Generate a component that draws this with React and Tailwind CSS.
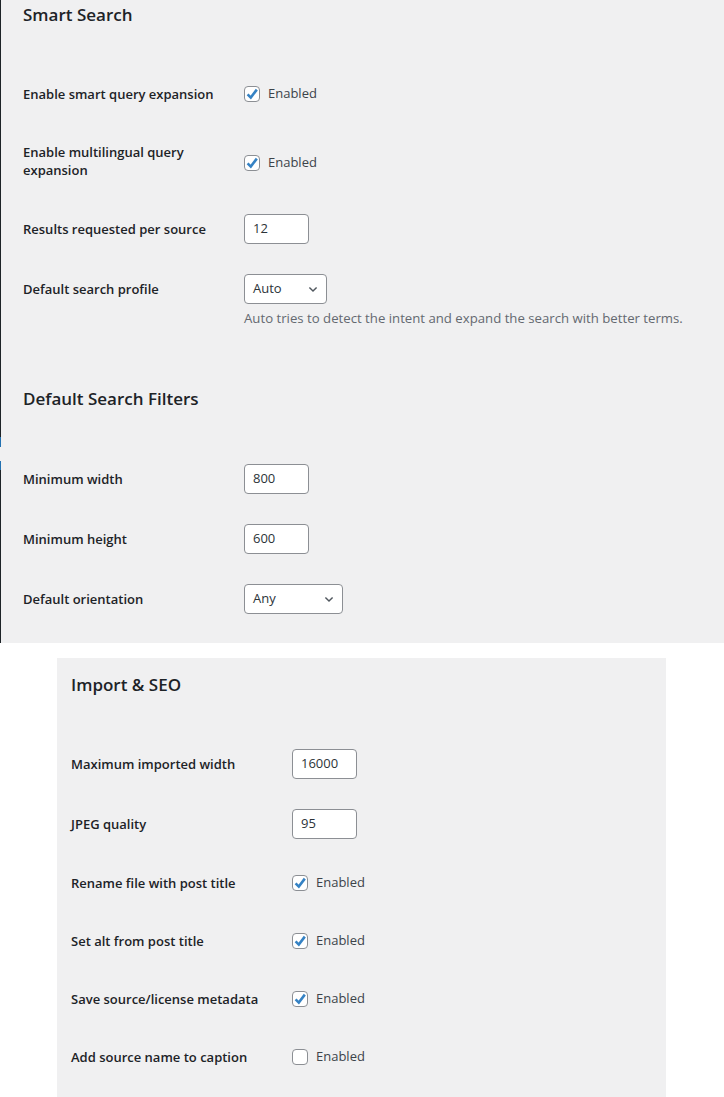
import React from "react";

const font = { fontFamily: '"Open Sans", "Noto Sans", Arial, sans-serif' };

function Check({ checked }) {
  return (
    <span className="relative flex h-4 w-4 shrink-0 items-center justify-center rounded-[4px] border border-[#8c8f94] bg-white">
      {checked && (
        <svg viewBox="0 0 16 16" className="absolute left-[-1px] top-[-1px] h-4 w-4 overflow-visible" aria-hidden="true">
          <path d="M3.6 8.4 L6.8 11.6 L12.8 3.6" fill="none" stroke="#3582c4" strokeWidth="2.6" strokeLinejoin="miter" strokeLinecap="butt" />
        </svg>
      )}
    </span>
  );
}

const labelCls = "w-[221px] shrink-0 text-[13px] font-semibold leading-[18px] text-[#1d2327]";

function CheckRow({ label, checked }) {
  return (
    <div className="flex h-[58px] items-center">
      <div className={labelCls}>{label}</div>
      <label className="flex items-center gap-2 text-[13px] text-[#3c434a]">
        <Check checked={checked} />
        <span>Enabled</span>
      </label>
    </div>
  );
}

function InputRow({ label, value }) {
  return (
    <div className="flex h-[60px] items-center">
      <div className={labelCls}>{label}</div>
      <div className="flex h-[30px] w-[65px] items-center rounded-[4px] border border-[#8c8f94] bg-white px-2 text-[13px] text-[#2c3338]">
        {value}
      </div>
    </div>
  );
}

function Chevron() {
  return (
    <svg viewBox="0 0 20 20" className="h-4 w-4" aria-hidden="true">
      <path d="M5.5 8l4.5 4.5 4.5-4.5" fill="none" stroke="#50575e" strokeWidth="1.8" />
    </svg>
  );
}

function Select({ value, width }) {
  return (
    <div
      className={`flex h-[30px] items-center justify-between rounded-[4px] border border-[#8c8f94] bg-white pl-2 pr-[5px] text-[13px] text-[#2c3338] ${width}`}
    >
      <span>{value}</span>
      <Chevron />
    </div>
  );
}

function Heading({ children }) {
  return <h2 className="flex h-[24px] items-center text-[17px] font-semibold text-[#1d2327]">{children}</h2>;
}

export default function App() {
  return (
    <div style={font} className="bg-white pb-0">
      <div className="flex bg-[#f0f0f1]">
        <div className="flex w-px shrink-0 flex-col">
          <div className="h-[437px] bg-[#1d2327]" />
          <div className="h-[10px] bg-[#2271b1]" />
          <div className="h-[14px]" />
          <div className="h-[9px] bg-[#2271b1]" />
          <div className="h-[173px] bg-[#1d2327]" />
        </div>
        <div className="flex-1 pl-[22px] pt-[3px] pb-[13px]">
          <Heading>Smart Search</Heading>
          <div className="mt-[38px]">
            <CheckRow label="Enable smart query expansion" checked />
            <div className="flex h-[76px] items-start pt-[20px]">
              <div className={`${labelCls} pr-2`}>Enable multilingual query expansion</div>
              <label className="mt-[10px] flex items-center gap-2 text-[13px] text-[#3c434a]">
                <Check checked />
                <span>Enabled</span>
              </label>
            </div>
            <InputRow label="Results requested per source" value="12" />
            <div className="flex items-start pt-[15px] pb-[15px]">
              <div className={`${labelCls} flex h-[30px] items-center`}>Default search profile</div>
              <div>
                <Select value="Auto" width="w-[83px]" />
                <p className="mt-1 text-[13.2px] leading-[21px] text-[#646970]">
                  Auto tries to detect the intent and expand the search with better terms.
                </p>
              </div>
            </div>
          </div>
          <div className="mt-[43px]">
            <Heading>Default Search Filters</Heading>
          </div>
          <div className="mt-[38px]">
            <InputRow label="Minimum width" value="800" />
            <InputRow label="Minimum height" value="600" />
            <div className="flex h-[60px] items-center">
              <div className={labelCls}>Default orientation</div>
              <Select value="Any" width="w-[99px]" />
            </div>
          </div>
        </div>
      </div>
      <div className="h-[15px]" />
      <div className="ml-[57px] w-[609px] bg-[#f0f0f1] pl-[14px] pt-[15px] pb-[12px]">
        <Heading>Import &amp; SEO</Heading>
        <div className="mt-[37px]">
          <InputRow label="Maximum imported width" value="16000" />
          <InputRow label="JPEG quality" value="95" />
          <CheckRow label="Rename file with post title" checked />
          <CheckRow label="Set alt from post title" checked />
          <CheckRow label="Save source/license metadata" checked />
          <CheckRow label="Add source name to caption" checked={false} />
        </div>
      </div>
    </div>
  );
}
